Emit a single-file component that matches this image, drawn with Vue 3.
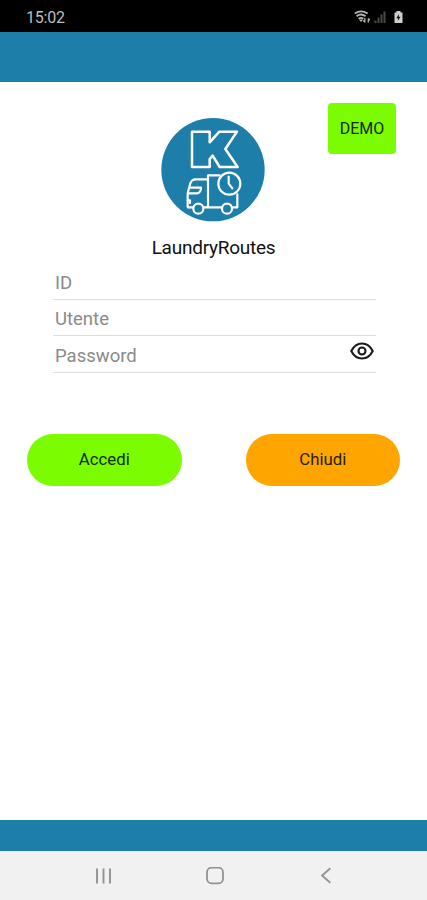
<script setup>
import { ref } from 'vue'

const fields = ref([
  { key: 'id', label: 'ID', type: 'text', value: '' },
  { key: 'user', label: 'Utente', type: 'text', value: '' },
  { key: 'password', label: 'Password', type: 'password', value: '' },
])
</script>

<template>
  <div class="screen">
    <div class="status">
      <span class="time">15:02</span>
      <svg class="status-icons" width="54" height="18" viewBox="0 0 54 18">
        <g fill="none" stroke="#b5b5b5" stroke-width="1.8">
          <path d="M.8 4.400Q7 .2 13.600 4.400M2.600 7.200Q7 3.800 11.600 7.200M4.600 9.800Q7 8 9.400 9.800" />
        </g>
        <path d="M4.800 10.400h4.400L7 13z" fill="#b5b5b5" />
        <path d="M10.800 9v4.200m-1.500-1.700l1.500 1.700M14.300 13.500V9.500m0 0l1.500 1.700" fill="none" stroke="#b5b5b5" stroke-width="1.300" />
        <g fill="#484848">
          <rect x="20.500" y="11.500" width="2" height="2.500" />
          <rect x="23.500" y="8.500" width="2" height="5.500" />
          <rect x="26.500" y="5.500" width="2" height="8.500" />
          <rect x="29.500" y="2.500" width="2" height="11.500" />
        </g>
        <path d="M40.500 3.500h2V2h4v1.500h2V14h-8z" fill="#cfcfcf" />
        <path d="M44.900 5l-2.600 4.200h1.900L43.700 12l2.900-4.200h-1.900z" fill="#111" />
      </svg>
    </div>
    <header class="bar-top"></header>

    <main class="content">
      <div class="brand">
        <svg class="logo" viewBox="18 24 312 312">
          <circle cx="174" cy="179" r="155" fill="#1c7ea9" />
          <g fill="none" stroke="#fff" stroke-linejoin="round" stroke-linecap="round">
            <path stroke-width="7.500" d="M111 65H164V97L193 65H246L211 117L248 171H194L173 137L164 147V171H111Z" />
            <g stroke-width="6.500">
              <path d="M113 292H98V250L106 220Q110 208 122 208H158" />
              <path d="M100 250H126Q138 248 138 233H106" />
              <path d="M98 271H105V279" />
              <path d="M159 291V196H194" />
              <path d="M148 292H199M234 292H247V253" />
              <circle cx="130" cy="296" r="15" />
              <circle cx="216" cy="296" r="15" />
              <circle cx="223" cy="221" r="33" />
              <path d="M221 200V221L232 235" />
            </g>
          </g>
        </svg>
        <button class="demo">DEMO</button>
      </div>
      <h1 class="title">LaundryRoutes</h1>

      <form class="form" @submit.prevent>
        <label v-for="f in fields" :key="f.key" class="field">
          <input v-model="f.value" :type="f.type" :placeholder="f.label" autocomplete="off" />
          <svg v-if="f.key === 'password'" class="eye" width="24" height="18" viewBox="0 0 24 18">
            <g fill="none" stroke="#1b1b1b" stroke-width="2.1">
              <path d="M1.300 9Q5 1.500 12 1.500T22.700 9Q19 16.500 12 16.500T1.300 9Z" />
              <circle cx="12" cy="9" r="3.500" />
            </g>
          </svg>
        </label>
      </form>

      <div class="actions">
        <button class="pill login">Accedi</button>
        <button class="pill close">Chiudi</button>
      </div>
    </main>

    <footer class="bar-bottom"></footer>
    <nav class="nav">
      <svg width="18" height="18" viewBox="0 0 18 18">
        <path d="M2 1.500v15M8.500 1.500v15M15 1.500v15" stroke="#929292" stroke-width="1.900" />
      </svg>
      <svg width="18" height="18" viewBox="0 0 18 18">
        <rect x="1" y=".7" width="16" height="15.600" rx="4.500" fill="none" stroke="#929292" stroke-width="1.800" />
      </svg>
      <svg width="18" height="18" viewBox="0 0 18 18">
        <path d="M13.300 1.300L5.100 8.500l8.200 7.200" fill="none" stroke="#929292" stroke-width="1.800" />
      </svg>
    </nav>
  </div>
</template>

<style>
body {
  margin: 0;
}
</style>

<style scoped>
.screen {
  display: flex;
  flex-direction: column;
  width: 100%;
  height: 900px;
  background: #fff;
  font-family: Roboto, "Liberation Sans", sans-serif;
  color: #111;
  overflow: hidden;
}
.status {
  display: flex;
  align-items: center;
  justify-content: space-between;
  box-sizing: border-box;
  flex: 0 0 32px;
  padding: 3px 19px 0 26px;
  background: #000;
}
.time {
  font-size: 16px;
  line-height: 20px;
  letter-spacing: -0.2px;
  color: #bdbdbd;
}
.status-icons {
  display: block;
}
.bar-top {
  flex: 0 0 50px;
  background: #1c7ea9;
}
.content {
  flex: 1;
}
.brand {
  display: grid;
  grid-template-columns: 1fr 104px 1fr;
  align-items: start;
  padding: 0 31px 0 30px;
}
.logo {
  grid-column: 2;
  width: 104px;
  height: 104px;
  margin-top: 36px;
}
.demo {
  justify-self: end;
  width: 68px;
  height: 51px;
  margin-top: 21px;
  padding: 0;
  border: 0;
  border-radius: 4px;
  background: #7cfc00;
  font: 16px/51px Roboto, sans-serif;
  color: #142800;
}
.title {
  margin: 14px 0 0;
  text-align: center;
  font-size: 19px;
  line-height: 24px;
  letter-spacing: -0.25px;
  font-weight: 400;
}
.form {
  margin: 3px 51px 0 53px;
}
.field {
  display: flex;
  align-items: center;
  box-sizing: border-box;
  height: 36.500px;
  padding: 0 2px;
  border-bottom: 1.500px solid #dcdcdc;
}
.field input {
  flex: 1;
  min-width: 0;
  padding: 4px 0 0;
  border: 0;
  outline: 0;
  background: none;
  font: 18.500px/24px Roboto, sans-serif;
}
.field input::placeholder {
  color: #8a8a8a;
  opacity: 1;
}
.eye {
  margin-bottom: 5px;
}
.actions {
  display: flex;
  justify-content: space-between;
  margin: 61px 27px 0;
}
.pill {
  width: 154.500px;
  height: 52px;
  padding: 0 0 1px;
  border: 0;
  border-radius: 26px;
  font: 16.800px/50px Roboto, sans-serif;
}
.login {
  background: #7cfc00;
  color: #142800;
}
.close {
  background: #ffa500;
  color: #2a1b00;
}
.bar-bottom {
  flex: 0 0 31px;
  background: #1c7ea9;
}
.nav {
  display: flex;
  align-items: center;
  justify-content: space-between;
  box-sizing: border-box;
  flex: 0 0 49px;
  padding: 0 92px 0 95px;
  background: #f1f1f1;
}
</style>
